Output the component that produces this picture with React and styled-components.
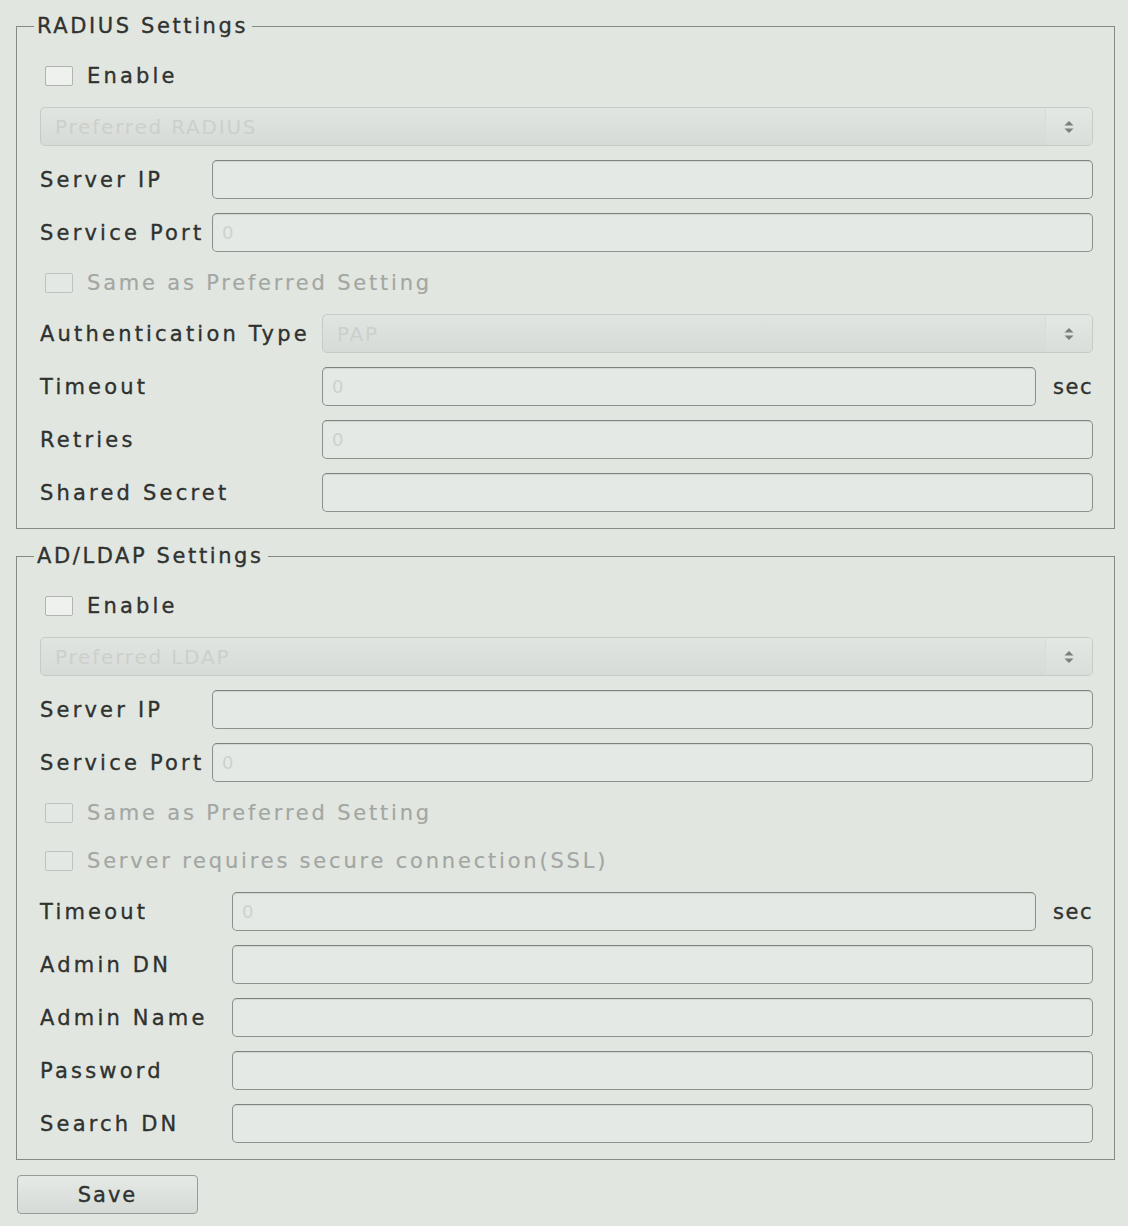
import React from "react";
import styled, { createGlobalStyle } from "styled-components";

const INK = "#2f322f";

const Global = createGlobalStyle`
  html, body { margin: 0; padding: 0; background: #e2e6e1; }
  body { font-family: "DejaVu Sans", "Liberation Sans", sans-serif; }
  * { box-sizing: border-box; }
`;

const Page = styled.div`
  min-height: 1226px;
  padding: 14px 13px 10px 16px;
  display: flex;
  flex-direction: column;
  gap: 15px;
  background: #e2e6e1;
`;

const Group = styled.fieldset`
  margin: 0;
  width: 1099px;
  padding: 21px 21px 16px 23px;
  border: 1.5px solid #858a85;
  border-radius: 0;
  display: flex;
  flex-direction: column;
  gap: 14px;
`;

const Legend = styled.legend`
  margin-left: -6px;
  padding: 0 4px 0 3px;
  font-size: 21px;
  line-height: 24px;
  letter-spacing: 2.6px;
  color: ${INK};
  -webkit-text-stroke: 0.35px ${INK};
`;

const CheckRow = styled.label`
  height: 34px;
  display: flex;
  align-items: center;
  gap: 14px;
  padding-left: 5px;
  font-size: 21px;
  letter-spacing: ${(p) => (p.$disabled ? "2.8px" : "3.2px")};
  color: ${(p) => (p.$disabled ? "#a3a7a3" : INK)};
  -webkit-text-stroke: ${(p) => (p.$disabled ? "0.2px #a3a7a3" : `0.35px ${INK}`)};
`;

const Box = styled.span`
  width: 28px;
  height: 20px;
  border: 1.5px solid ${(p) => (p.$disabled ? "#bfc3bf" : "#b0b5b0")};
  border-radius: 2px;
  background: ${(p) => (p.$disabled ? "#e4e8e4" : "#eef1ee")};
  flex: none;
`;

const Select = styled.div`
  height: 39px;
  display: flex;
  align-items: stretch;
  border: 1px solid #c6cbc6;
  border-radius: 5px;
  background: linear-gradient(#e1e5e1, #d7dbd7);
  overflow: hidden;
  grid-column: ${(p) => (p.$inRow ? "2 / -1" : "auto")};
`;

const SelectText = styled.span`
  flex: 1;
  display: flex;
  align-items: center;
  padding-left: 14px;
  font-size: 20px;
  letter-spacing: 1.8px;
  color: #cbd0cb;
`;

const Spinner = styled.span`
  width: 47px;
  display: flex;
  align-items: center;
  justify-content: center;
  background: linear-gradient(#e4e8e4, #dadeda);
  border-left: 1px solid #d8dcd8;
`;

const Row = styled.div`
  height: 39px;
  display: grid;
  grid-template-columns: ${(p) => p.$label}px 1fr ${(p) => (p.$suffix ? "42px" : "")};
  column-gap: 15px;
  align-items: center;
`;

const Label = styled.span`
  font-size: 21px;
  letter-spacing: 3.2px;
  color: ${INK};
  -webkit-text-stroke: 0.35px ${INK};
  white-space: nowrap;
  grid-column: 1;
`;

const Input = styled.div`
  grid-column: ${(p) => (p.$suffix ? "2" : "2 / -1")};
  height: 39px;
  border: 1.5px solid #8c918c;
  border-top-color: #7d827d;
  border-radius: 5px;
  background: #e5e9e5;
  box-shadow: inset 0 1px 1px rgba(0, 0, 0, 0.08);
  display: flex;
  align-items: center;
  padding-left: 9px;
  font-size: 18px;
  color: #cdd1cd;
`;

const Suffix = styled.span`
  grid-column: 3;
  font-size: 21px;
  letter-spacing: 1.5px;
  color: ${INK};
  -webkit-text-stroke: 0.35px ${INK};
  text-align: right;
`;

const SaveButton = styled.button`
  width: 181px;
  height: 39px;
  margin-left: 1px;
  border: 1.5px solid #979c97;
  border-radius: 4px;
  background: linear-gradient(#e6eae6, #d6dad6);
  font-family: "DejaVu Sans", sans-serif;
  font-size: 21px;
  letter-spacing: 2px;
  color: ${INK};
  -webkit-text-stroke: 0.35px ${INK};
  padding: 0;
`;

const Arrows = () => (
  <svg width="12" height="16" viewBox="0 0 12 16">
    <path d="M6 2 L10.5 6.5 L1.5 6.5 Z" fill="#7a7f7a" />
    <path d="M6 14 L10.5 9.5 L1.5 9.5 Z" fill="#7a7f7a" />
  </svg>
);

const Check = ({ children, disabled }) => (
  <CheckRow $disabled={disabled}>
    <Box $disabled={disabled} />
    {children}
  </CheckRow>
);

const Dropdown = ({ text, inRow }) => (
  <Select $inRow={inRow}>
    <SelectText>{text}</SelectText>
    <Spinner>
      <Arrows />
    </Spinner>
  </Select>
);

const Field = ({ label, w, value, suffix }) => (
  <Row $label={w} $suffix={!!suffix}>
    <Label>{label}</Label>
    <Input $suffix={!!suffix}>{value}</Input>
    {suffix && <Suffix>{suffix}</Suffix>}
  </Row>
);

export default function App() {
  return (
    <>
      <Global />
      <Page>
        <Group>
          <Legend>RADIUS Settings</Legend>
          <Check>Enable</Check>
          <Dropdown text="Preferred RADIUS" />
          <Field label="Server IP" w={157} />
          <Field label="Service Port" w={157} value="0" />
          <Check disabled>Same as Preferred Setting</Check>
          <Row $label={267}>
            <Label>Authentication Type</Label>
            <Dropdown text="PAP" inRow />
          </Row>
          <Field label="Timeout" w={267} value="0" suffix="sec" />
          <Field label="Retries" w={267} value="0" />
          <Field label="Shared Secret" w={267} />
        </Group>
        <Group>
          <Legend>AD/LDAP Settings</Legend>
          <Check>Enable</Check>
          <Dropdown text="Preferred LDAP" />
          <Field label="Server IP" w={157} />
          <Field label="Service Port" w={157} value="0" />
          <Check disabled>Same as Preferred Setting</Check>
          <Check disabled>Server requires secure connection(SSL)</Check>
          <Field label="Timeout" w={177} value="0" suffix="sec" />
          <Field label="Admin DN" w={177} />
          <Field label="Admin Name" w={177} />
          <Field label="Password" w={177} />
          <Field label="Search DN" w={177} />
        </Group>
        <div>
          <SaveButton>Save</SaveButton>
        </div>
      </Page>
    </>
  );
}
